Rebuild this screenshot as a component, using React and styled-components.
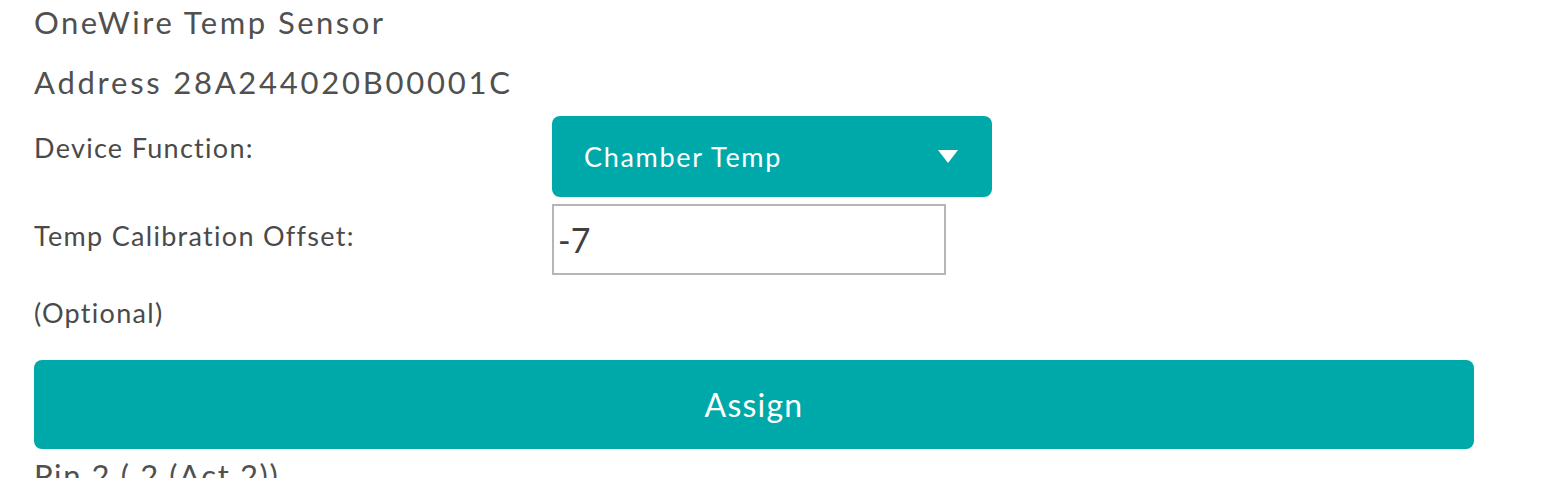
import styled, { createGlobalStyle } from "styled-components";

const GlobalStyle = createGlobalStyle`
    body {
        margin: 0;
        background: #ffffff;
        font-family: "Lato", "Open Sans", sans-serif;
        font-variant-ligatures: none;
        color: #505050;
    }
`;

const Page = styled.div`
    padding: 4px 0 0 34px;
    width: 1440px;
    height: 478px;
    overflow: hidden;
`;

// big lines: title, address, pin header
const Heading = styled.div`
    font-size: 31px;
    line-height: 36px;
    color: #505050;
    letter-spacing: ${(p) => p.spacing || 0}px;
    margin-top: ${(p) => p.top || 0}px;
    margin-bottom: ${(p) => p.gap || 0}px;
`;

const FormGrid = styled.div`
    display: grid;
    grid-template-columns: 518px auto;
    row-gap: 7px;
    align-items: start;
`;

const Label = styled.label`
    font-size: 27px;
    line-height: 31px;
    letter-spacing: 1.3px;
    color: #4a4a4a;
    padding-top: ${(p) => p.top || 0}px;
`;

const Dropdown = styled.div`
    width: 440px;
    height: 81px;
    box-sizing: border-box;
    padding: 0 34px 0 32px;
    background: #00a9a9;
    border-radius: 8px;
    display: flex;
    align-items: center;
    justify-content: space-between;
    color: #ffffff;
    font-size: 27px;
    letter-spacing: 1.7px;
`;

const Arrow = styled.svg`
    width: 20px;
    height: 13px;
    display: block;
`;

const TextInput = styled.input`
    width: 394px;
    height: 71px;
    box-sizing: border-box;
    border: 2px solid #b5b5b5;
    padding: 0 4px;
    font-family: "Lato", sans-serif;
    font-size: 34px;
    color: #404040;
    outline: none;
    margin: 0;
`;

const Optional = styled.div`
    font-size: 27px;
    line-height: 31px;
    letter-spacing: 1.3px;
    color: #4a4a4a;
    margin-top: 22px;
`;

const AssignButton = styled.button`
    display: block;
    width: 1440px;
    height: 89px;
    margin-top: 32px;
    border: none;
    border-radius: 8px;
    background: #00a9a9;
    color: #ffffff;
    font-family: "Lato", sans-serif;
    font-size: 32px;
    letter-spacing: 1.2px;
    cursor: pointer;
`;

function App() {
    return (
        <>
            <GlobalStyle />
            <Page>
                <Heading spacing={2.5} gap={24}>OneWire Temp Sensor</Heading>
                <Heading spacing={2.75} gap={16}>Address 28A244020B00001C</Heading>

                <FormGrid>
                    <Label top={16}>Device Function:</Label>
                    <Dropdown>
                        <span>Chamber Temp</span>
                        <Arrow viewBox="0 0 20 13">
                            <polygon points="0,0 20,0 10,13" fill="#ffffff" />
                        </Arrow>
                    </Dropdown>

                    <Label top={16}>Temp Calibration Offset:</Label>
                    <TextInput type="text" defaultValue="-7" />
                </FormGrid>

                <Optional>(Optional)</Optional>

                <AssignButton>Assign</AssignButton>
                <Heading spacing={1.6} top={8}>Pin 2 ( 2 (Act 2))</Heading>
            </Page>
        </>
    );
}

export default App;
